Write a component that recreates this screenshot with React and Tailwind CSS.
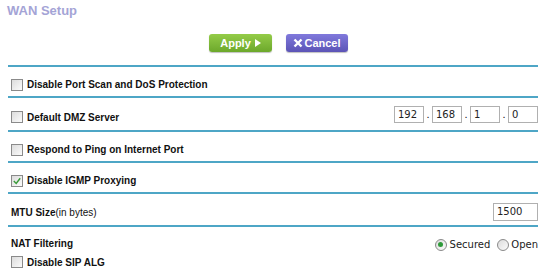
import React from "react";

const Line = () => <div className="h-[2px] bg-[#4ea6c6]" />;

const Check = ({ checked }) => (
  <span className="relative inline-block w-[12px] h-[12px] border border-[#8a8a8a] bg-gradient-to-br from-[#dcdcdc] to-[#fbfbfb] shrink-0">
    {checked && (
      <svg viewBox="0 0 10 10" className="absolute left-[1px] top-[1px] w-[8px] h-[8px]">
        <path d="M1 5 L4 8 L9 1.5" fill="none" stroke="#3a9a3a" strokeWidth="1.8" />
      </svg>
    )}
  </span>
);

const Radio = ({ on }) => (
  <span className="relative inline-flex items-center justify-center w-[12px] h-[12px] rounded-full border border-[#8a8a8a] bg-gradient-to-br from-[#dcdcdc] to-[#fbfbfb]">
    {on && <span className="w-[5px] h-[5px] rounded-full bg-[#2f9a3a]" />}
  </span>
);

const Box = ({ value, w = "w-[30px] h-[17px]" }) => (
  <div className={`${w} border border-[#b0b0b0] bg-white pl-[3px] text-[10px] leading-[15px] text-[#222] font-['DejaVu_Sans',sans-serif]`}>
    {value}
  </div>
);

const CheckRow = ({ label, checked, h, children }) => (
  <div className={`${h} flex items-center justify-between`}>
    <div className="flex items-center gap-[4px] pl-[3px] mt-[6px]">
      <Check checked={checked} />
      <span className="font-bold text-[10px] text-[#111]">{label}</span>
    </div>
    {children}
  </div>
);

export default function App() {
  const ip = ["192", "168", "1", "0"];
  return (
    <div className="w-[550px] h-[271px] bg-white overflow-hidden font-['Liberation_Sans',Arial,sans-serif] text-[#111]">
      <div className="h-[22px] pt-[3px] pl-[7px] text-[13px] leading-[16px] font-bold text-[#a4a4d6]">WAN Setup</div>

      <div className="mt-[12px] flex pl-[209px] gap-[14px]">
        <button className="w-[63px] h-[18px] rounded-[3px] bg-gradient-to-b from-[#94cc48] to-[#6ca82b] text-white text-[11px] font-bold flex items-center justify-center gap-[4px] shadow-[0_1px_1px_rgba(0,0,0,0.25)]">
          Apply
          <svg viewBox="0 0 6 8" className="w-[6px] h-[8px]"><path d="M0 0 L6 4 L0 8 Z" fill="white" /></svg>
        </button>
        <button className="w-[62px] h-[18px] rounded-[3px] bg-gradient-to-b from-[#8079dc] to-[#5c54b6] text-white text-[11px] font-bold flex items-center justify-center gap-[1px] shadow-[0_1px_1px_rgba(0,0,0,0.25)]">
          <svg viewBox="0 0 10 10" className="w-[10px] h-[10px]"><path d="M1.5 1.5 L8.5 8.5 M8.5 1.5 L1.5 8.5" stroke="white" strokeWidth="2.4" /></svg>
          Cancel
        </button>
      </div>

      <div className="mt-[13px] mx-[8px] w-[530px]">
        <Line />
        <CheckRow label="Disable Port Scan and DoS Protection" h="h-[29px]" />
        <Line />
        <CheckRow label="Default DMZ Server" h="h-[32px]">
          <div className="flex items-center">
            {ip.map((v, i) => (
              <React.Fragment key={i}>
                {i > 0 && <span className="w-[8px] text-center text-[11px] leading-none">.</span>}
                <Box value={v} />
              </React.Fragment>
            ))}
          </div>
        </CheckRow>
        <Line />
        <CheckRow label="Respond to Ping on Internet Port" h="h-[29px]" />
        <Line />
        <CheckRow label="Disable IGMP Proxying" checked h="h-[29px]" />
        <Line />
        <div className="h-[31px] flex items-center justify-between pl-[3px] pt-[5px]">
          <span className="text-[10px]">
            <span className="font-bold">MTU Size</span>(in bytes)
          </span>
          <Box value="1500" w="w-[45px] h-[18px]" />
        </div>
        <Line />
        <div className="mt-[8px] h-[16px] flex items-center justify-between pl-[3px]">
          <span className="font-bold text-[10px]">NAT Filtering</span>
          <div className="flex items-center text-[10px] font-['DejaVu_Sans',sans-serif] text-[#222] mt-[3px]">
            <Radio on />
            <span className="ml-[3px] mr-[7px]">Secured</span>
            <Radio />
            <span className="ml-[2px]">Open</span>
          </div>
        </div>
        <div className="mt-[3px] h-[16px] flex items-center gap-[4px] pl-[3px]">
          <Check />
          <span className="font-bold text-[10px]">Disable SIP ALG</span>
        </div>
      </div>
    </div>
  );
}
